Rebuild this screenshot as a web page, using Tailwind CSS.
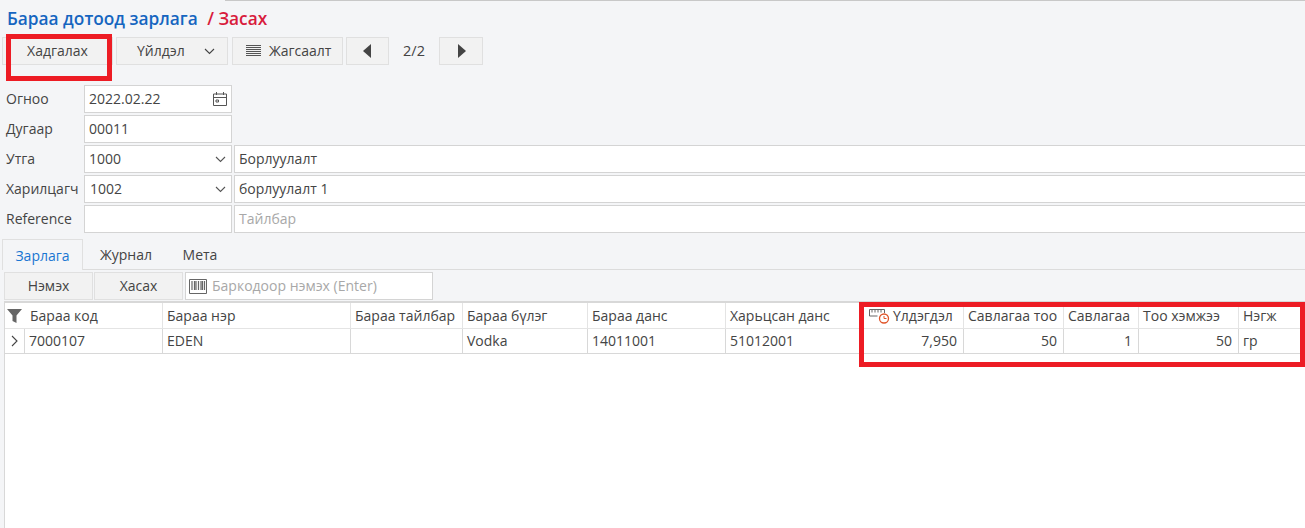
<!DOCTYPE html>
<html lang="mn">
<head>
    <meta charset="UTF-8">
    <title>Бараа дотоод зарлага</title>
    <script src="https://cdn.jsdelivr.net/npm/@tailwindcss/browser@4"></script>
</head>
<body class="relative w-[1305px] h-[528px] overflow-hidden bg-[#f4f5f7] font-['Open_Sans','Noto_Sans',sans-serif] text-[14px] leading-[20px] text-[#444]">
    <div class="ml-[225px] h-px bg-[#c8c8c8]"></div>

    <!-- Title -->
    <h1 class="pl-[7px] pt-[7px] h-[36px] text-[17.3px] leading-[22px] font-semibold text-[#1565c0]">Бараа дотоод зарлага <span class="ml-[5px] text-[#d81b3c]">/ Засах</span></h1>

    <!-- Toolbar -->
    <div class="flex items-center h-[28px] pl-[2px]">
        <button class="w-[111px] h-[28px] bg-[#f2f2f2] border border-[#e0e0e0]">Хадгалах</button>
        <button class="ml-[3px] w-[112px] h-[28px] bg-[#f2f2f2] border border-[#e0e0e0] flex items-center pl-[20px]">
            Үйлдэл
            <svg class="ml-[19px]" width="11" height="7" viewBox="0 0 11 7" fill="none" stroke="#444" stroke-width="1.1"><path d="M1 1l4.5 4.5L10 1"/></svg>
        </button>
        <button class="ml-[4px] w-[111px] h-[28px] bg-[#f2f2f2] border border-[#e0e0e0] flex items-center pl-[13px]">
            <svg class="mr-[8px]" width="15" height="12" viewBox="0 0 15 12" stroke="#555" stroke-width="1"><path d="M0 .5h15M0 2.5h15M0 4.5h15M0 6.5h15M0 8.5h15M0 10.5h15"/></svg>
            Жагсаалт
        </button>
        <button class="ml-[3px] w-[43px] h-[28px] bg-[#f2f2f2] border border-[#e0e0e0] flex items-center justify-center">
            <svg width="9" height="14" viewBox="0 0 9 14" fill="#444"><path d="M8 0v14L0 7z"/></svg>
        </button>
        <span class="w-[50px] text-center text-[14.5px]">2/2</span>
        <button class="w-[44px] h-[28px] bg-[#f2f2f2] border border-[#e0e0e0] flex items-center justify-center">
            <svg width="9" height="14" viewBox="0 0 9 14" fill="#444"><path d="M1 0v14l8-7z"/></svg>
        </button>
    </div>

    <!-- Form -->
    <div class="mt-[20px] flex flex-col gap-[2px] pl-[6px]">
        <div class="flex items-center h-[28px]">
            <label class="w-[78px]">Огноо</label>
            <div class="w-[148px] h-[28px] bg-white border border-[#d4d4d4] flex items-center justify-between pl-[4px] pr-[3px]">
                2022.02.22
                <svg width="16" height="16" viewBox="0 0 16 16" fill="none" stroke="#555"><path d="M1.5 3h13v11.5h-13zM1.5 6.5h13M4.5 1v3M11.5 1v3"/><path d="M4 9h2.5v2H4z"/></svg>
            </div>
        </div>
        <div class="flex items-center h-[28px]">
            <label class="w-[78px]">Дугаар</label>
            <div class="w-[148px] h-[28px] bg-white border border-[#d4d4d4] flex items-center pl-[4px]">00011</div>
        </div>
        <div class="flex items-center h-[28px]">
            <label class="w-[78px]">Утга</label>
            <div class="w-[148px] h-[28px] bg-white border border-[#d4d4d4] flex items-center justify-between pl-[4px] pr-[5px]">
                1000
                <svg width="11" height="7" viewBox="0 0 11 7" fill="none" stroke="#555" stroke-width="1.1"><path d="M1 1l4.5 4.5L10 1"/></svg>
            </div>
            <div class="ml-[2px] -mr-[3px] flex-1 h-[28px] bg-white border border-[#d4d4d4] flex items-center pl-[4px]">Борлуулалт</div>
        </div>
        <div class="flex items-center h-[28px]">
            <label class="w-[78px]">Харилцагч</label>
            <div class="w-[148px] h-[28px] bg-white border border-[#d4d4d4] flex items-center justify-between pl-[5px] pr-[5px]">
                1002
                <svg width="11" height="7" viewBox="0 0 11 7" fill="none" stroke="#555" stroke-width="1.1"><path d="M1 1l4.5 4.5L10 1"/></svg>
            </div>
            <div class="ml-[2px] -mr-[3px] flex-1 h-[28px] bg-white border border-[#d4d4d4] flex items-center pl-[4px]">борлуулалт 1</div>
        </div>
        <div class="flex items-center h-[28px]">
            <label class="w-[78px]">Reference</label>
            <div class="w-[148px] h-[28px] bg-white border border-[#d4d4d4]"></div>
            <div class="ml-[2px] -mr-[3px] flex-1 h-[28px] bg-white border border-[#d4d4d4] flex items-center pl-[4px] text-[#a8a8a8]">Тайлбар</div>
        </div>
    </div>

    <!-- Tabs -->
    <div class="mt-[6px] ml-[2px] h-[31px] flex border-b border-[#dcdcdc]">
        <div class="w-[81px] h-[31px] pt-[2px] bg-[#f4f5f7] border border-[#e0e0e0] border-b-0 flex items-center justify-center text-[#1976d2]">Зарлага</div>
        <div class="w-[86px] pt-[2px] flex items-center justify-center">Журнал</div>
        <div class="w-[62px] pt-[2px] flex items-center justify-center">Мета</div>
    </div>

    <!-- Grid toolbar -->
    <div class="mt-[2px] pl-[4px] flex h-[28px]">
        <button class="w-[89px] h-[28px] bg-[#f2f2f2] border border-[#e0e0e0]">Нэмэх</button>
        <button class="ml-px w-[89px] h-[28px] bg-[#f2f2f2] border border-[#e0e0e0]">Хасах</button>
        <div class="ml-[2px] w-[248px] h-[28px] bg-white border border-[#d4d4d4] flex items-center pl-[3px] text-[#a8a8a8]">
            <svg class="mr-[5px]" width="18" height="15" viewBox="0 0 18 15" fill="none" stroke="#666"><path d="M.5.5h17v14H.5z"/><path d="M3 2v9M5.500 2v9M7 2v9M9.500 2v9M12 2v9M13.500 2v9M15.500 2v9" stroke-width="1.2"/></svg>
            Баркодоор нэмэх (Enter)
        </div>
    </div>

    <!-- Grid -->
    <div class="mt-px ml-[4px] h-[227px] bg-white border-t-2 border-l border-[#d8d8d8]">
        <div class="grid grid-cols-[20px_138px_188px_112px_125px_138px_138px_100px_100px_75px_100px_62px]">
            <div class="h-[26px] border-b border-[#e4e4e4] flex items-center justify-center pr-[2px]">
                <svg width="15" height="16" viewBox="0 0 15 16" fill="#666"><path d="M0 1h15L9.500 7.500V15L5.500 13V7.500z"/></svg>
            </div>
            <div class="h-[26px] border-b border-r border-[#e4e4e4] pl-[5px] flex items-center">Бараа код</div>
            <div class="h-[26px] border-b border-r border-[#e4e4e4] pl-[4px] flex items-center">Бараа нэр</div>
            <div class="h-[26px] border-b border-r border-[#e4e4e4] pl-[4px] flex items-center whitespace-nowrap">Бараа тайлбар</div>
            <div class="h-[26px] border-b border-r border-[#e4e4e4] pl-[4px] flex items-center">Бараа бүлэг</div>
            <div class="h-[26px] border-b border-r border-[#e4e4e4] pl-[4px] flex items-center">Бараа данс</div>
            <div class="h-[26px] border-b border-r border-[#e4e4e4] pl-[4px] flex items-center">Харьцсан данс</div>
            <div class="h-[26px] border-b border-r border-[#e4e4e4] pl-[5px] flex items-center">
                <svg class="mr-[3px]" width="21" height="16" viewBox="0 0 21 16" fill="none"><path d="M.5 8V1.500h15V5M3 1.500v3M6 1.500v3M9 1.500v3M12 1.500v3M.5 8h8" stroke="#666"/><circle cx="15" cy="10.500" r="4.500" stroke="#e0552a" stroke-width="1.300"/><path d="M15 8v2.500h2.500" stroke="#e0552a"/></svg>
                Үлдэгдэл
            </div>
            <div class="h-[26px] border-b border-r border-[#e4e4e4] pl-[4px] flex items-center whitespace-nowrap">Савлагаа тоо</div>
            <div class="h-[26px] border-b border-r border-[#e4e4e4] pl-[4px] flex items-center">Савлагаа</div>
            <div class="h-[26px] border-b border-r border-[#e4e4e4] pl-[4px] flex items-center whitespace-nowrap">Тоо хэмжээ</div>
            <div class="h-[26px] border-b border-[#e4e4e4] pl-[4px] flex items-center">Нэгж</div>

            <div class="h-[25px] border-b border-r border-[#d8d8d8] flex items-center justify-center">
                <svg width="7" height="12" viewBox="0 0 7 12" fill="none" stroke="#444" stroke-width="1.100"><path d="M1 1l5 5-5 5"/></svg>
            </div>
            <div class="h-[25px] border-b border-r border-[#d8d8d8] pl-[4px] flex items-center">7000107</div>
            <div class="h-[25px] border-b border-r border-[#d8d8d8] pl-[4px] flex items-center">EDEN</div>
            <div class="h-[25px] border-b border-r border-[#d8d8d8]"></div>
            <div class="h-[25px] border-b border-r border-[#d8d8d8] pl-[4px] flex items-center">Vodka</div>
            <div class="h-[25px] border-b border-r border-[#d8d8d8] pl-[4px] flex items-center">14011001</div>
            <div class="h-[25px] border-b border-r border-[#d8d8d8] pl-[4px] flex items-center">51012001</div>
            <div class="h-[25px] border-b border-r border-[#d8d8d8] pr-[6px] flex items-center justify-end">7,950</div>
            <div class="h-[25px] border-b border-r border-[#d8d8d8] pr-[6px] flex items-center justify-end">50</div>
            <div class="h-[25px] border-b border-r border-[#d8d8d8] pr-[6px] flex items-center justify-end">1</div>
            <div class="h-[25px] border-b border-r border-[#d8d8d8] pr-[6px] flex items-center justify-end">50</div>
            <div class="h-[25px] border-b border-[#d8d8d8] pl-[4px] flex items-center">гр</div>
        </div>
    </div>

    <!-- Red highlights -->
    <div class="absolute left-[6px] top-[34px] w-[106px] h-[47px] border-[5px] border-[#ed1c24]"></div>
    <div class="absolute left-[859px] top-[302px] w-[446px] h-[65px] border-[5px] border-[#ed1c24]"></div>
</body>
</html>
